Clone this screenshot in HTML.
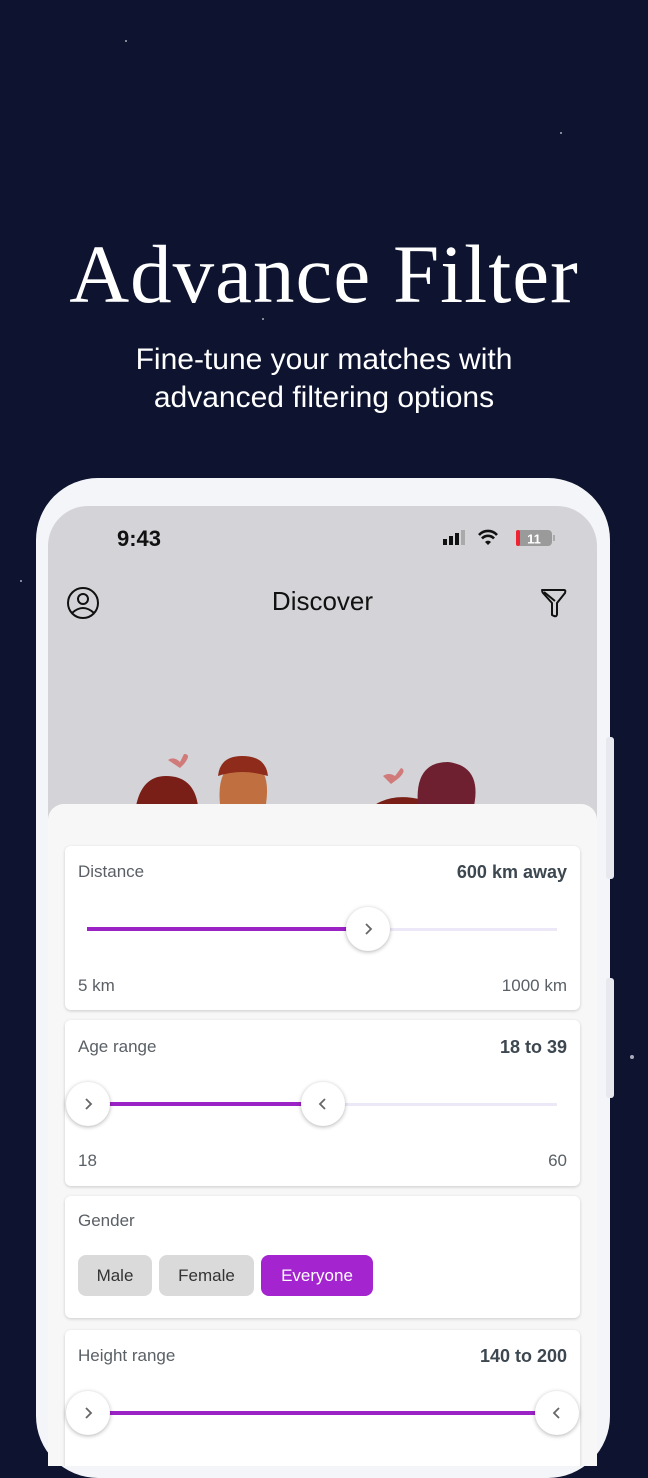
<!DOCTYPE html>
<html><head><meta charset="utf-8"><style>
*{margin:0;padding:0;box-sizing:border-box}
body{width:648px;height:1440px;overflow:hidden;background:#0e1430;position:relative;font-family:"Liberation Sans",sans-serif}
.title{position:absolute;top:226px;width:648px;text-align:center;color:#fff;font-family:"Liberation Serif",serif;font-size:83px;letter-spacing:1px}
.sub{position:absolute;top:341px;width:648px;text-align:center;color:#fff;font-size:30px;line-height:38px}
.phone{position:absolute;left:36px;top:478px;width:574px;height:1000px;background:#f4f5f8;border-radius:62px}
.btn{position:absolute;left:606px;width:8px;background:#e8e9ee;border-radius:3px}
.screen{position:absolute;left:48px;top:506px;width:549px;height:960px;background:#d4d4d8;border-radius:40px 40px 0 0;overflow:hidden}
.sheet{position:absolute;left:0;top:298px;width:549px;height:700px;background:#f7f7f7;border-radius:16px 16px 0 0}
.card{position:absolute;left:17px;width:515px;background:#fff;border-radius:6px;box-shadow:0 1px 3px rgba(0,0,0,.18)}
.lbl{position:absolute;left:13px;font-size:17px;color:#5a6066}
.val{position:absolute;right:13px;font-size:18px;color:#3d4750;font-weight:bold}
.track{position:absolute;height:3px;background:#ece8f7}
.fill{position:absolute;height:4px;background:#9b23c6}
.knob{position:absolute;width:44px;height:44px;border-radius:50%;background:#fff;box-shadow:0 1px 4px rgba(0,0,0,.3)}
.knob svg{position:absolute;left:15px;top:15px}
.chip{position:absolute;top:59px;height:41px;border-radius:8px;background:#dadada;font-size:17px;color:#333;text-align:center;line-height:41px}
.star{position:absolute;width:2px;height:2px;background:#aab;border-radius:50%}
</style></head><body>
<div class="star" style="left:125px;top:40px"></div><div class="star" style="left:262px;top:318px"></div><div class="star" style="left:560px;top:132px"></div><div class="star" style="left:630px;top:1055px;width:4px;height:4px"></div><div class="star" style="left:20px;top:580px"></div>
<div class="title">Advance Filter</div>
<div class="sub">Fine-tune your matches with<br>advanced filtering options</div>
<div class="phone"></div>
<div class="btn" style="top:737px;height:142px"></div>
<div class="btn" style="top:978px;height:120px"></div>
<div class="screen">
 <div style="position:absolute;left:69px;top:20px;font-size:22px;font-weight:bold;color:#111">9:43</div>
 <svg style="position:absolute;left:395px;top:22px" width="120" height="20" viewBox="0 0 120 20">
  <rect x="0" y="11" width="4" height="6" fill="#111"/><rect x="6" y="8" width="4" height="9" fill="#111"/><rect x="12" y="5" width="4" height="12" fill="#111"/><rect x="18" y="2" width="4" height="15" fill="#aaa"/>
  <path d="M36 7 a12 12 0 0 1 18 0" stroke="#111" stroke-width="2.6" fill="none"/><path d="M39 10.5 a8 8 0 0 1 12 0" stroke="#111" stroke-width="2.6" fill="none"/><path d="M42 14 l3 3 l3 -3 a4 4 0 0 0 -6 0z" fill="#111"/>
  <rect x="73" y="2" width="36" height="16" rx="4" fill="#9a9a9a"/><rect x="73" y="2" width="4" height="16" rx="2" fill="#e23"/><text x="91" y="15.5" font-size="13" font-weight="bold" fill="#fff" text-anchor="middle" font-family="Liberation Sans">11</text><rect x="110" y="7" width="2" height="6" fill="#aaa"/>
 </svg>
 <svg style="position:absolute;left:18px;top:80px" width="34" height="34" viewBox="0 0 34 34" fill="none" stroke="#111" stroke-width="2"><circle cx="17" cy="17" r="15"/><circle cx="17" cy="13" r="5"/><path d="M6 27 q11-10 22 0"/></svg>
 <div style="position:absolute;left:0;width:549px;top:80px;text-align:center;font-size:26px;color:#111">Discover</div>
 <svg style="position:absolute;left:491px;top:81px" width="28" height="32" viewBox="0 0 28 32" fill="none" stroke="#111" stroke-width="2" stroke-linejoin="round"><path d="M3 3 h22 q2 0 1 3 l-8 10 v11 q0 3 -3 2 l-2 -1 v-12 l-9 -10 q-2-3 1-3z"/><path d="M5 5 l11 9"/></svg>
 <svg style="position:absolute;left:80px;top:240px" width="380" height="60" viewBox="0 0 380 60">
  <path d="M40 14 q6 -4 12 2 l4 -8 q8 0 0 10 l-4 4 z" fill="#d07a7a"/>
  <path d="M8 60 q6 -30 30 -30 q28 0 32 30z" fill="#7a1f17"/>
  <path d="M92 58 q-4 -40 24 -44 q28 4 22 44z" fill="#c07040"/><path d="M90 30 q2 -20 24 -20 q24 0 26 20 q-26 -8 -50 0z" fill="#8e2b1b"/>
  <path d="M255 30 q6 -4 12 0 l6 -8 q6 2 -2 10 l-8 6z" fill="#d07a7a"/>
  <path d="M245 60 q20 -14 50 -6 v6z" fill="#7a1f17"/>
  <path d="M290 60 q-4 -44 30 -44 q34 4 26 44z" fill="#6e2030"/>
 </svg>
 <div class="sheet">
  <div class="card" style="top:42px;height:164px">
   <div class="lbl" style="top:16px">Distance</div><div class="val" style="top:16px">600 km away</div>
   <div class="track" style="left:22px;width:470px;top:82px"></div><div class="fill" style="left:22px;width:260px;top:81px"></div>
   <div class="knob" style="left:281px;top:61px"><svg width="14" height="14" viewBox="0 0 14 14"><path d="M5 2 l5 5 l-5 5" stroke="#666" stroke-width="1.8" fill="none"/></svg></div>
   <div class="lbl" style="top:130px">5 km</div><div class="lbl" style="top:130px;left:auto;right:13px">1000 km</div>
  </div>
  <div class="card" style="top:216px;height:166px">
   <div class="lbl" style="top:17px">Age range</div><div class="val" style="top:17px">18 to 39</div>
   <div class="track" style="left:40px;width:452px;top:83px"></div><div class="fill" style="left:40px;width:200px;top:82px"></div>
   <div class="knob" style="left:1px;top:62px"><svg width="14" height="14" viewBox="0 0 14 14"><path d="M5 2 l5 5 l-5 5" stroke="#666" stroke-width="1.8" fill="none"/></svg></div>
   <div class="knob" style="left:236px;top:62px"><svg width="14" height="14" viewBox="0 0 14 14"><path d="M9 2 l-5 5 l5 5" stroke="#666" stroke-width="1.8" fill="none"/></svg></div>
   <div class="lbl" style="top:131px">18</div><div class="lbl" style="top:131px;left:auto;right:13px">60</div>
  </div>
  <div class="card" style="top:392px;height:122px">
   <div class="lbl" style="top:15px">Gender</div>
   <div class="chip" style="left:13px;width:74px">Male</div>
   <div class="chip" style="left:94px;width:95px">Female</div>
   <div class="chip" style="left:196px;width:112px;background:#a424cf;color:#fff">Everyone</div>
  </div>
  <div class="card" style="top:526px;height:200px">
   <div class="lbl" style="top:16px">Height range</div><div class="val" style="top:16px">140 to 200</div>
   <div class="fill" style="left:40px;width:436px;top:81px"></div>
   <div class="knob" style="left:1px;top:61px"><svg width="14" height="14" viewBox="0 0 14 14"><path d="M5 2 l5 5 l-5 5" stroke="#666" stroke-width="1.8" fill="none"/></svg></div>
   <div class="knob" style="left:470px;top:61px"><svg width="14" height="14" viewBox="0 0 14 14"><path d="M9 2 l-5 5 l5 5" stroke="#666" stroke-width="1.8" fill="none"/></svg></div>
  </div>
 </div>
</div>
</body></html>
